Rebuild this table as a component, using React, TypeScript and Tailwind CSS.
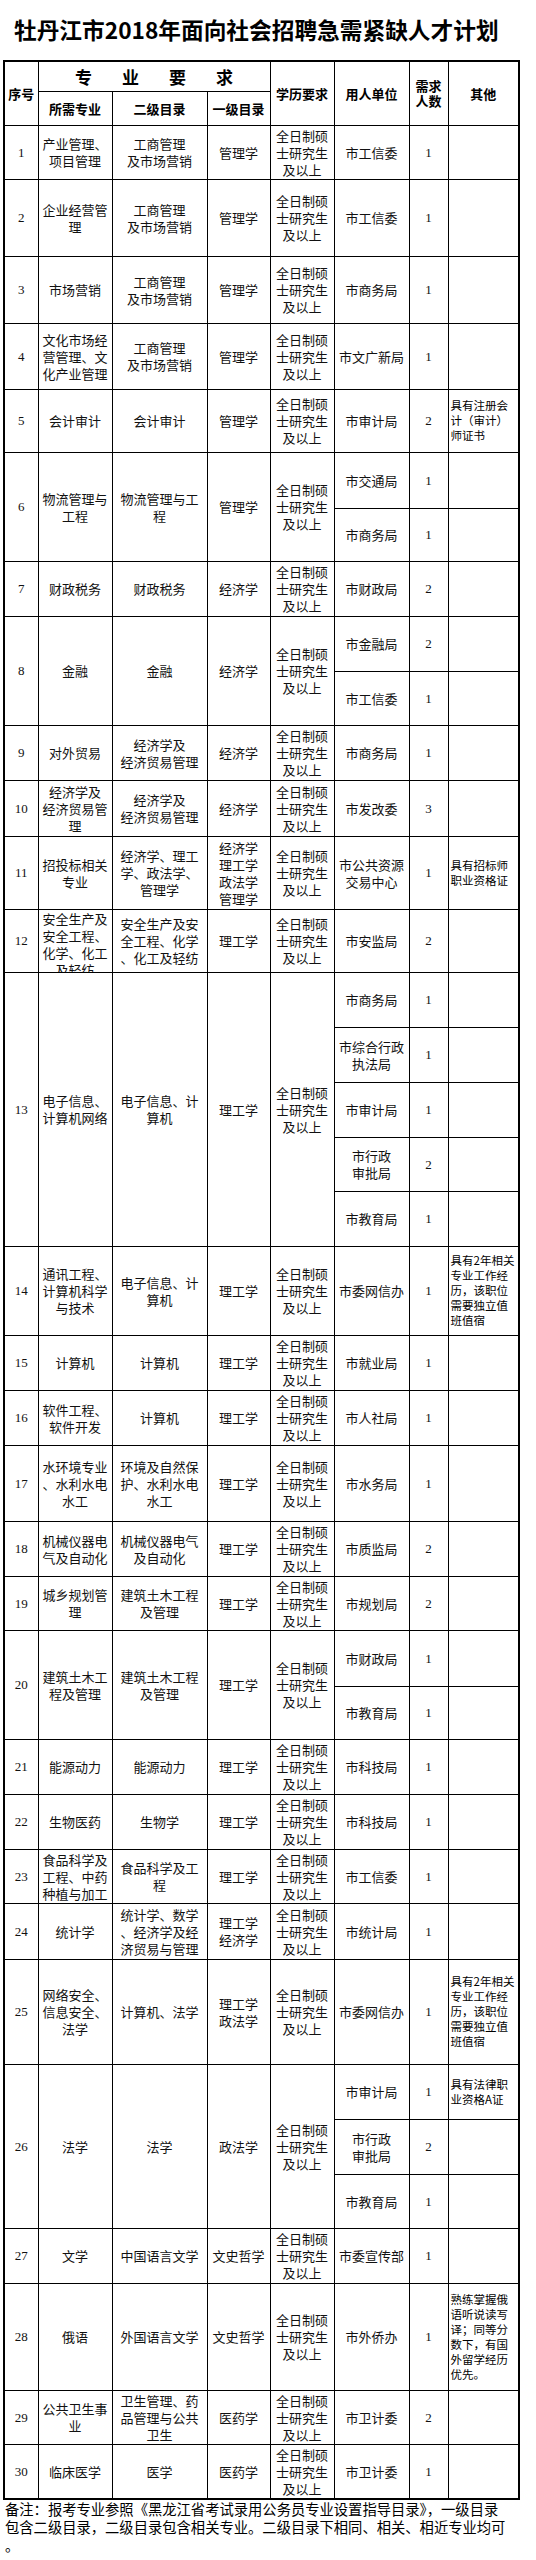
import React from "react";

type Unit = { name: string[]; count: string; other?: string[]; h: string };
type Row = {
  no: string;
  major: string[];
  sub: string[];
  first: string[];
  units: Unit[];
  clip?: boolean;
};

const EDU = ["全日制硕", "士研究生", "及以上"];

const rows: Row[] = [
  { no: "1", major: ["产业管理、", "项目管理"], sub: ["工商管理", "及市场营销"], first: ["管理学"], units: [{ name: ["市工信委"], count: "1", h: "h-[54px]" }] },
  { no: "2", major: ["企业经营管", "理"], sub: ["工商管理", "及市场营销"], first: ["管理学"], units: [{ name: ["市工信委"], count: "1", h: "h-[77px]" }] },
  { no: "3", major: ["市场营销"], sub: ["工商管理", "及市场营销"], first: ["管理学"], units: [{ name: ["市商务局"], count: "1", h: "h-[67px]" }] },
  { no: "4", major: ["文化市场经", "营管理、文", "化产业管理"], sub: ["工商管理", "及市场营销"], first: ["管理学"], units: [{ name: ["市文广新局"], count: "1", h: "h-[66px]" }] },
  { no: "5", major: ["会计审计"], sub: ["会计审计"], first: ["管理学"], units: [{ name: ["市审计局"], count: "2", other: ["具有注册会", "计（审计）", "师证书"], h: "h-[63px]" }] },
  {
    no: "6", major: ["物流管理与", "工程"], sub: ["物流管理与工", "程"], first: ["管理学"],
    units: [
      { name: ["市交通局"], count: "1", h: "h-[56px]" },
      { name: ["市商务局"], count: "1", h: "h-[53px]" },
    ],
  },
  { no: "7", major: ["财政税务"], sub: ["财政税务"], first: ["经济学"], units: [{ name: ["市财政局"], count: "2", h: "h-[55px]" }] },
  {
    no: "8", major: ["金融"], sub: ["金融"], first: ["经济学"],
    units: [
      { name: ["市金融局"], count: "2", h: "h-[55px]" },
      { name: ["市工信委"], count: "1", h: "h-[54px]" },
    ],
  },
  { no: "9", major: ["对外贸易"], sub: ["经济学及", "经济贸易管理"], first: ["经济学"], units: [{ name: ["市商务局"], count: "1", h: "h-[55px]" }] },
  { no: "10", major: ["经济学及", "经济贸易管", "理"], sub: ["经济学及", "经济贸易管理"], first: ["经济学"], units: [{ name: ["市发改委"], count: "3", h: "h-[56px]" }] },
  {
    no: "11", major: ["招投标相关", "专业"], sub: ["经济学、理工", "学、政法学、", "管理学"], first: ["经济学", "理工学", "政法学", "管理学"],
    units: [{ name: ["市公共资源", "交易中心"], count: "1", other: ["具有招标师", "职业资格证"], h: "h-[73px]" }],
  },
  {
    no: "12", major: ["安全生产及", "安全工程、", "化学、化工", "及轻纺"], sub: ["安全生产及安", "全工程、化学", "、化工及轻纺"], first: ["理工学"], clip: true,
    units: [{ name: ["市安监局"], count: "2", h: "h-[63px]" }],
  },
  {
    no: "13", major: ["电子信息、", "计算机网络"], sub: ["电子信息、计", "算机"], first: ["理工学"],
    units: [
      { name: ["市商务局"], count: "1", h: "h-[55px]" },
      { name: ["市综合行政", "执法局"], count: "1", h: "h-[55px]" },
      { name: ["市审计局"], count: "1", h: "h-[55px]" },
      { name: ["市行政", "审批局"], count: "2", h: "h-[54px]" },
      { name: ["市教育局"], count: "1", h: "h-[55px]" },
    ],
  },
  {
    no: "14", major: ["通讯工程、", "计算机科学", "与技术"], sub: ["电子信息、计", "算机"], first: ["理工学"],
    units: [{ name: ["市委网信办"], count: "1", other: ["具有2年相关", "专业工作经", "历，该职位", "需要独立值", "班值宿"], h: "h-[89px]" }],
  },
  { no: "15", major: ["计算机"], sub: ["计算机"], first: ["理工学"], units: [{ name: ["市就业局"], count: "1", h: "h-[55px]" }] },
  { no: "16", major: ["软件工程、", "软件开发"], sub: ["计算机"], first: ["理工学"], units: [{ name: ["市人社局"], count: "1", h: "h-[55px]" }] },
  { no: "17", major: ["水环境专业", "、水利水电", "水工"], sub: ["环境及自然保", "护、水利水电", "水工"], first: ["理工学"], units: [{ name: ["市水务局"], count: "1", h: "h-[76px]" }] },
  { no: "18", major: ["机械仪器电", "气及自动化"], sub: ["机械仪器电气", "及自动化"], first: ["理工学"], units: [{ name: ["市质监局"], count: "2", h: "h-[55px]" }] },
  { no: "19", major: ["城乡规划管", "理"], sub: ["建筑土木工程", "及管理"], first: ["理工学"], units: [{ name: ["市规划局"], count: "2", h: "h-[54px]" }] },
  {
    no: "20", major: ["建筑土木工", "程及管理"], sub: ["建筑土木工程", "及管理"], first: ["理工学"],
    units: [
      { name: ["市财政局"], count: "1", h: "h-[56px]" },
      { name: ["市教育局"], count: "1", h: "h-[53px]" },
    ],
  },
  { no: "21", major: ["能源动力"], sub: ["能源动力"], first: ["理工学"], units: [{ name: ["市科技局"], count: "1", h: "h-[55px]" }] },
  { no: "22", major: ["生物医药"], sub: ["生物学"], first: ["理工学"], units: [{ name: ["市科技局"], count: "1", h: "h-[55px]" }] },
  { no: "23", major: ["食品科学及", "工程、中药", "种植与加工"], sub: ["食品科学及工", "程"], first: ["理工学"], units: [{ name: ["市工信委"], count: "1", h: "h-[54px]" }] },
  { no: "24", major: ["统计学"], sub: ["统计学、数学", "、经济学及经", "济贸易与管理"], first: ["理工学", "经济学"], units: [{ name: ["市统计局"], count: "1", h: "h-[56px]" }] },
  {
    no: "25", major: ["网络安全、", "信息安全、", "法学"], sub: ["计算机、法学"], first: ["理工学", "政法学"],
    units: [{ name: ["市委网信办"], count: "1", other: ["具有2年相关", "专业工作经", "历，该职位", "需要独立值", "班值宿"], h: "h-[105px]" }],
  },
  {
    no: "26", major: ["法学"], sub: ["法学"], first: ["政法学"],
    units: [
      { name: ["市审计局"], count: "1", other: ["具有法律职", "业资格A证"], h: "h-[55px]" },
      { name: ["市行政", "审批局"], count: "2", h: "h-[55px]" },
      { name: ["市教育局"], count: "1", h: "h-[54px]" },
    ],
  },
  { no: "27", major: ["文学"], sub: ["中国语言文学"], first: ["文史哲学"], units: [{ name: ["市委宣传部"], count: "1", h: "h-[55px]" }] },
  {
    no: "28", major: ["俄语"], sub: ["外国语言文学"], first: ["文史哲学"],
    units: [{ name: ["市外侨办"], count: "1", other: ["熟练掌握俄", "语听说读写", "译；同等分", "数下，有国", "外留学经历", "优先。"], h: "h-[107px]" }],
  },
  { no: "29", major: ["公共卫生事", "业"], sub: ["卫生管理、药", "品管理与公共", "卫生"], first: ["医药学"], units: [{ name: ["市卫计委"], count: "2", h: "h-[54px]" }] },
  { no: "30", major: ["临床医学"], sub: ["医学"], first: ["医药学"], units: [{ name: ["市卫计委"], count: "1", h: "h-[55px]" }] },
];

const Lines = ({ lines }: { lines: string[] }) => (
  <div>
    {lines.map((l, i) => (
      <div key={i} className="whitespace-nowrap">
        {l}
      </div>
    ))}
  </div>
);

const cell = "border border-black p-0 text-center align-middle";
const serif = " font-['Liberation_Serif',serif] text-[13px]";

const App: React.FC = () => {
  return (
    <div className="w-[536px] bg-white text-[#111] font-['Noto_Sans_CJK_SC',sans-serif]">
      <div className="h-[60px] flex items-center pl-[14px] text-[22.7px] font-bold text-black">
        牡丹江市2018年面向社会招聘急需紧缺人才计划
      </div>

      <table className="ml-[3px] w-[515px] table-fixed border-collapse border-2 border-black text-[13px] leading-[17px]">
        <colgroup>
          <col className="w-[34px]" />
          <col className="w-[74px]" />
          <col className="w-[95px]" />
          <col className="w-[63px]" />
          <col className="w-[64px]" />
          <col className="w-[75px]" />
          <col className="w-[39px]" />
          <col className="w-[71px]" />
        </colgroup>
        <thead className="font-bold text-black">
          <tr className="h-[30px]">
            <th rowSpan={2} className={cell}>序号</th>
            <th colSpan={3} className={cell}>
              <div className="flex justify-center gap-[30px] text-[17px]">
                <span>专</span>
                <span>业</span>
                <span>要</span>
                <span>求</span>
              </div>
            </th>
            <th rowSpan={2} className={cell}>学历要求</th>
            <th rowSpan={2} className={cell}>用人单位</th>
            <th rowSpan={2} className={cell + " leading-[15px]"}>
              <div>需求</div>
              <div>人数</div>
            </th>
            <th rowSpan={2} className={cell}>其他</th>
          </tr>
          <tr className="h-[34px]">
            <th className={cell}>所需专业</th>
            <th className={cell}>二级目录</th>
            <th className={cell}>一级目录</th>
          </tr>
        </thead>
        <tbody>
          {rows.map((r) =>
            r.units.map((u, i) => (
              <tr key={r.no + "-" + i} className={u.h}>
                {i === 0 && (
                  <>
                    <td rowSpan={r.units.length} className={cell + serif}>
                      {r.no}
                    </td>
                    <td rowSpan={r.units.length} className={cell}>
                      {r.clip ? (
                        <div className="h-[62px] overflow-hidden">
                          <Lines lines={r.major} />
                        </div>
                      ) : (
                        <Lines lines={r.major} />
                      )}
                    </td>
                    <td rowSpan={r.units.length} className={cell}>
                      <Lines lines={r.sub} />
                    </td>
                    <td rowSpan={r.units.length} className={cell}>
                      <Lines lines={r.first} />
                    </td>
                    <td rowSpan={r.units.length} className={cell}>
                      <Lines lines={EDU} />
                    </td>
                  </>
                )}
                <td className={cell}>
                  <Lines lines={u.name} />
                </td>
                <td className={cell + serif}>{u.count}</td>
                <td className="border border-black p-0 pl-[2px] text-left align-middle text-[11.5px] leading-[15px] text-black">
                  {u.other && <Lines lines={u.other} />}
                </td>
              </tr>
            ))
          )}
        </tbody>
      </table>

      <div className="pl-[5px] text-[14.3px] leading-[18px] text-black">
        <div className="whitespace-nowrap">备注：报考专业参照《黑龙江省考试录用公务员专业设置指导目录》，一级目录</div>
        <div className="whitespace-nowrap">包含二级目录，二级目录包含相关专业。二级目录下相同、相关、相近专业均可</div>
        <div>。</div>
      </div>
    </div>
  );
};

export default App;
